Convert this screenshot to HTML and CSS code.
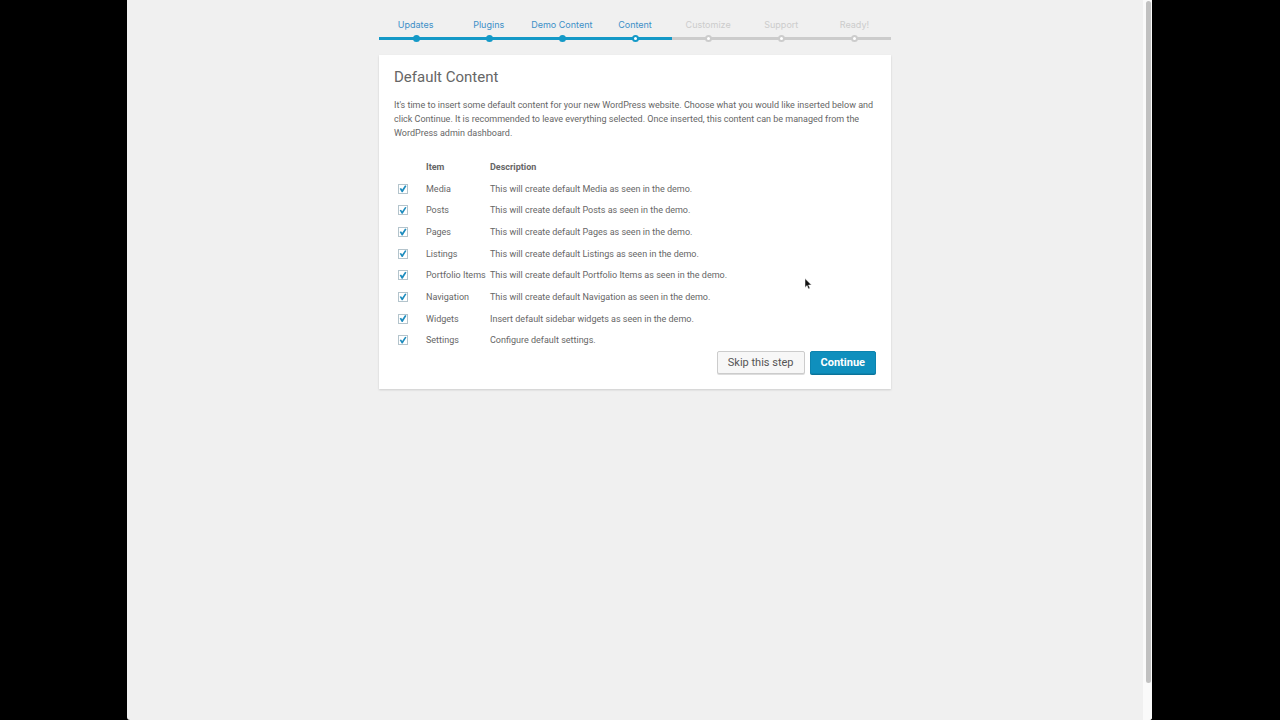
FILE: index.html
```html
<!DOCTYPE html>
<html lang="en">
<head>
<meta charset="UTF-8">
<title>Default Content</title>
<link rel="stylesheet" href="styles.css">
</head>
<body>
	<div class="window">
		<div class="page">
			<div class="setup">
				<ol class="steps">
					<li class="done"><a href="#">Updates</a></li>
					<li class="done"><a href="#">Plugins</a></li>
					<li class="done"><a href="#">Demo Content</a></li>
					<li class="active">Content</li>
					<li>Customize</li>
					<li>Support</li>
					<li>Ready!</li>
				</ol>
				<form class="content">
					<h1>Default Content</h1>
					<p>It's time to insert some default content for your new WordPress website. Choose what you would like inserted below and click Continue. It is recommended to leave everything selected. Once inserted, this content can be managed from the WordPress admin dashboard.</p>
					<table class="items">
						<thead>
							<tr><td class="check"></td><th class="item">Item</th><th>Description</th></tr>
						</thead>
						<tbody>
							<tr><td><input type="checkbox" id="media" checked></td><td><label for="media">Media</label></td><td>This will create default Media as seen in the demo.</td></tr>
							<tr><td><input type="checkbox" id="posts" checked></td><td><label for="posts">Posts</label></td><td>This will create default Posts as seen in the demo.</td></tr>
							<tr><td><input type="checkbox" id="pages" checked></td><td><label for="pages">Pages</label></td><td>This will create default Pages as seen in the demo.</td></tr>
							<tr><td><input type="checkbox" id="listings" checked></td><td><label for="listings">Listings</label></td><td>This will create default Listings as seen in the demo.</td></tr>
							<tr><td><input type="checkbox" id="portfolio" checked></td><td><label for="portfolio">Portfolio Items</label></td><td>This will create default Portfolio Items as seen in the demo.</td></tr>
							<tr><td><input type="checkbox" id="navigation" checked></td><td><label for="navigation">Navigation</label></td><td>This will create default Navigation as seen in the demo.</td></tr>
							<tr><td><input type="checkbox" id="widgets" checked></td><td><label for="widgets">Widgets</label></td><td>Insert default sidebar widgets as seen in the demo.</td></tr>
							<tr><td><input type="checkbox" id="settings" checked></td><td><label for="settings">Settings</label></td><td>Configure default settings.</td></tr>
						</tbody>
					</table>
					<div class="actions">
						<button type="button" class="button">Skip this step</button>
						<button type="submit" class="button primary">Continue</button>
					</div>
				</form>
			</div>
		</div>
		<div class="scrollbar"><div class="thumb"></div></div>
	</div>
	<svg class="cursor" width="8" height="12" viewBox="0 0 8 12">
		<path d="M1 .5v9l2-2 1.500 3.500 1.500-.7-1.500-3.300H7.500z" fill="#111" stroke="#fff" stroke-width=".5"/>
	</svg>
</body>
</html>
```

FILE: styles.css
```css
*,
*::before {
	box-sizing: border-box;
}
body {
	margin: 0;
	padding: 0 10%;
	background: #000;
	color: #666;
	font: 9px/14px Roboto, "Liberation Sans", sans-serif;
}
.window {
	display: flex;
	min-height: 100vh;
	margin-left: -1px;
	background: #f0f0f0;
	border-radius: 0 0 3px 3px;
	overflow: hidden;
}
.page {
	flex: 1;
}
.setup {
	width: 100%;
	max-width: 512px;
	margin: 0 auto;
	padding-top: 18px;
}
.steps {
	display: flex;
	margin: 0 0 15px;
	padding: 0;
	list-style: none;
	font-family: Inter, "Liberation Sans", sans-serif;
}
.steps li {
	flex: 1;
	position: relative;
	padding-bottom: 5px;
	border-bottom: 3px solid #ccc;
	color: #ccc;
	text-align: center;
	white-space: nowrap;
}
.steps li::before {
	content: "";
	position: absolute;
	bottom: -5px;
	left: calc(50% - 3px);
	width: 7px;
	height: 7px;
	border: 2px solid #ccc;
	border-radius: 50%;
	background: #fff;
}
.steps .done,
.steps .active {
	border-color: #1499c7;
	color: #3c8fc7;
}
.steps .done::before,
.steps .active::before {
	border-color: #1499c7;
}
.steps .done::before {
	background: #1499c7;
}
.steps a {
	color: inherit;
	text-decoration: none;
}
.content {
	padding: 15px;
	background: #fff;
	box-shadow: 0 1px 2px rgba(0, 0, 0, .15);
}
.content h1 {
	margin: 0 0 14px;
	font-size: 15px;
	line-height: 14px;
	font-weight: 400;
}
.content p {
	margin: 0 0 16px;
}
.items {
	width: 100%;
	height: 195px;
	border-collapse: collapse;
}
.items th,
.items td {
	padding: 0;
	text-align: left;
}
.items th {
	height: 22px;
	font-weight: 700;
}
.items .check {
	width: 32px;
}
.items .item {
	width: 64px;
}
.items input {
	-webkit-appearance: none;
	appearance: none;
	display: block;
	width: 10px;
	height: 10px;
	margin: 0 0 0 4px;
	border: 1px solid #b4c4cc;
	background: #fff;
}
.items input:checked::before {
	content: "";
	display: block;
	width: 8px;
	height: 8px;
	background: #1e8cbe;
	clip-path: polygon(8% 48%, 26% 40%, 40% 60%, 76% 6%, 94% 14%, 46% 92%, 34% 92%);
}
.actions {
	display: flex;
	justify-content: flex-end;
	gap: 5px;
}
.button {
	height: 23px;
	padding: 0 10px;
	border: 1px solid #ccc;
	border-radius: 2px;
	background: #f7f7f7;
	box-shadow: 0 1px 0 #ddd;
	color: #555;
	font: 11px/20px Roboto, "Liberation Sans", sans-serif;
	cursor: pointer;
}
.button.primary {
	border-color: #0c83ae;
	background: #0f8fbd;
	box-shadow: 0 1px 0 #0b7399;
	color: #fff;
	font-weight: 700;
}
.scrollbar {
	width: 9px;
	padding: 1px 1px 1px 3px;
	background: #fafafa;
}
.thumb {
	height: 95%;
	border-radius: 3px;
	background: #c1c1c1;
}
.cursor {
	position: absolute;
	left: 804px;
	top: 278px;
}
```
